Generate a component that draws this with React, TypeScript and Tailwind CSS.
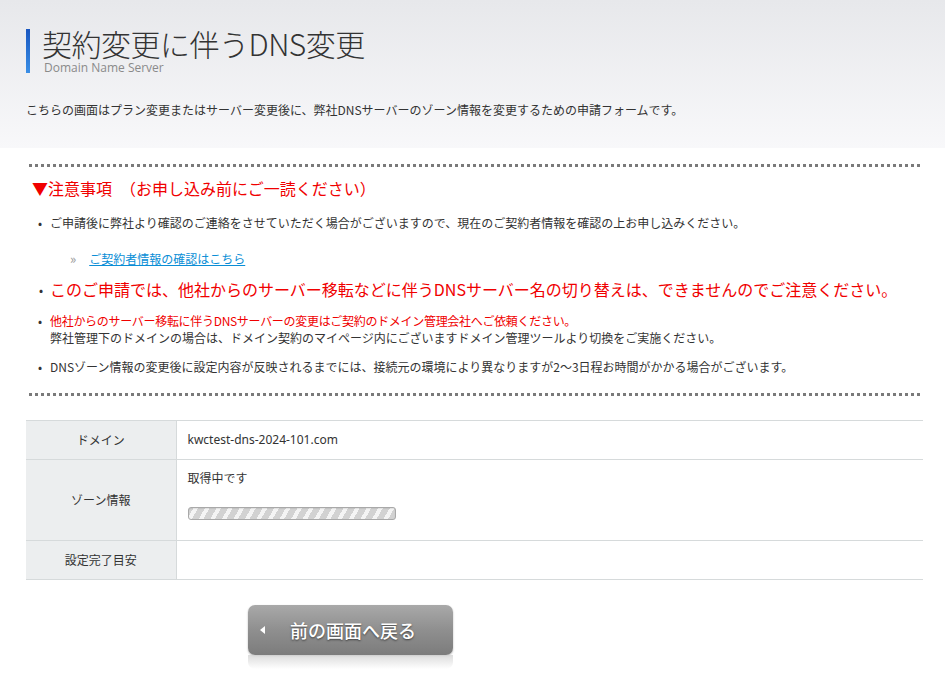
import React from "react";

const jp = '"Noto Sans CJK JP", "Noto Sans", sans-serif';

function Dotted({ className = "" }: { className?: string }) {
  return <div className={`ml-[29px] w-[891px] border-t-[3px] border-dotted border-[#7a7a7a] ${className}`} />;
}

export default function App() {
  return (
    <div className="w-[945px] h-[675px] bg-white text-[#333] overflow-hidden" style={{ fontFamily: jp }}>
      <div className="h-[148px] bg-gradient-to-b from-[#e7e8eb] to-[#f8f8fa] pl-[26px] pt-[29px]">
        <div className="flex items-start">
          <div className="w-[4px] h-[44px] bg-gradient-to-b from-[#1a57c0] to-[#3b8fe6]" />
          <div className="ml-[12px]">
            <h1 className="text-[30px] leading-[30px] text-[#333] font-light tracking-[-0.5px] -mt-[1px]">契約変更に伴うDNS変更</h1>
            <div className="text-[12px] leading-[14px] text-[#8a8a8a] mt-[3px] ml-[2px]" style={{ fontFamily: '"Open Sans", "Noto Sans", sans-serif' }}>Domain Name Server</div>
          </div>
        </div>
        <p className="text-[12px] leading-[16px] mt-[27px]">こちらの画面はプラン変更またはサーバー変更後に、弊社DNSサーバーのゾーン情報を変更するための申請フォームです。</p>
      </div>

      <Dotted className="mt-[16px]" />

      <div className="pl-[32px] mt-[9px]">
        <div className="text-[16px] leading-[24px] text-[#f00000]">▼注意事項　（お申し込み前にご一読ください）</div>
      </div>

      <ul className="pl-[38px] mt-[14px] text-[12px] leading-[17px]">
        <li className="flex">
          <span className="w-[12px] shrink-0">•</span>
          <span>ご申請後に弊社より確認のご連絡をさせていただく場合がございますので、現在のご契約者情報を確認の上お申し込みください。</span>
        </li>
        <li className="mt-[19px] pl-[32px] flex items-center">
          <span className="text-[#999] text-[13px] mr-[13px]">»</span>
          <a className="text-[#0a8ed6] underline">ご契約者情報の確認はこちら</a>
        </li>
        <li className="flex items-center mt-[10px] text-[#f00000]">
          <span className="w-[12px] pl-[1px] shrink-0 text-[12px] text-[#333]">•</span>
          <span className="text-[16px] leading-[24px]">このご申請では、他社からのサーバー移転などに伴うDNSサーバー名の切り替えは、できませんのでご注意ください。</span>
        </li>
        <li className="flex mt-[11px]">
          <span className="w-[12px] shrink-0">•</span>
          <span className="leading-[17px]">
            <span className="text-[#f00000] tracking-[-0.3px]">他社からのサーバー移転に伴うDNSサーバーの変更はご契約のドメイン管理会社へご依頼ください。</span>
            <br />
            弊社管理下のドメインの場合は、ドメイン契約のマイページ内にございますドメイン管理ツールより切換をご実施ください。
          </span>
        </li>
        <li className="flex mt-[12px]">
          <span className="w-[12px] shrink-0">•</span>
          <span>DNSゾーン情報の変更後に設定内容が反映されるまでには、接続元の環境により異なりますが2～3日程お時間がかかる場合がございます。</span>
        </li>
      </ul>

      <Dotted className="mt-[18px]" />

      <table className="ml-[26px] w-[897px] mt-[24px] border-collapse text-[12px]">
        <tbody>
          <tr className="h-[39px] border-t border-b border-[#d6dadb]">
            <th className="w-[150px] bg-[#eceeef] font-normal text-center border-r border-[#d6dadb]">ドメイン</th>
            <td className="pl-[11px]" style={{ fontFamily: '"Noto Sans", sans-serif' }}>kwctest-dns-2024-101.com</td>
          </tr>
          <tr className="h-[81px] border-b border-[#d6dadb]">
            <th className="bg-[#eceeef] font-normal text-center border-r border-[#d6dadb]">ゾーン情報</th>
            <td className="pl-[11px] align-top pt-[9px]">
              <div className="leading-[18px]">取得中です</div>
              <div
                className="mt-[20px] w-[208px] h-[13px] rounded-[3px] border border-[#a9a9a9]"
                style={{
                  backgroundImage:
                    "repeating-linear-gradient(-60deg, #d2d2d2 0px, #d2d2d2 6px, #f4f4f4 6px, #f4f4f4 10px)",
                  boxShadow: "inset 0 1px 1px rgba(0,0,0,0.08)",
                }}
              />
            </td>
          </tr>
          <tr className="h-[39px] border-b border-[#d6dadb]">
            <th className="bg-[#eceeef] font-normal text-center border-r border-[#d6dadb]">設定完了目安</th>
            <td className="pl-[11px]"></td>
          </tr>
        </tbody>
      </table>

      <div className="ml-[248px] mt-[25px] w-[205px]">
        <button
          className="relative w-[205px] h-[50px] rounded-[7px] bg-gradient-to-b from-[#a9a9a9] via-[#8f8f8f] to-[#7c7c7c] flex items-center text-white shadow-[0_1px_2px_rgba(0,0,0,0.3)]"
          style={{ fontFamily: jp }}
        >
          <span className="ml-[12px] w-0 h-0 border-y-[4px] border-y-transparent border-r-[5px] border-r-white" />
          <span className="ml-[25px] text-[18px] font-medium" style={{ textShadow: "0 1px 2px rgba(0,0,0,0.55)" }}>前の画面へ戻る</span>
        </button>
        <div className="w-[205px] h-[14px] rounded-b-[7px] bg-gradient-to-b from-[#d4d4d4] to-[#ffffff] opacity-80" />
      </div>
    </div>
  );
}
